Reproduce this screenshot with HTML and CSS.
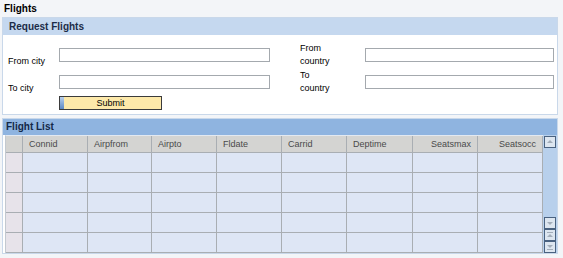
FILE: index.html
```html
<!DOCTYPE html>
<html lang="en">
<head>
  <meta charset="UTF-8" />
  <title>Flights</title>
  <link rel="stylesheet" href="styles.css">
</head>
<body>
  <div class="page">
    <div class="page-title">Flights</div>

    <div class="panel request">
      <div class="panel-head">Request Flights</div>
      <div class="form">
        <label class="lbl city" for="fromCity">From city</label>
        <input class="field city-field" id="fromCity" type="text" />
        <label class="lbl country" for="fromCountry">From<br>country</label>
        <input class="field country-field" id="fromCountry" type="text" />

        <label class="lbl city" for="toCity">To city</label>
        <input class="field city-field" id="toCity" type="text" />
        <label class="lbl country" for="toCountry">To<br>country</label>
        <input class="field country-field" id="toCountry" type="text" />

        <button class="submit" type="button">Submit</button>
      </div>
    </div>

    <div class="panel flights">
      <div class="panel-head dark">Flight List</div>
      <div class="list-body">
        <table class="flight-table">
          <colgroup>
            <col class="c-sel"><col class="c65"><col class="c64"><col class="c65"><col class="c65">
            <col class="c65"><col class="c66"><col class="c65"><col class="c65">
          </colgroup>
          <thead>
            <tr>
              <th class="sel"></th>
              <th>Connid</th>
              <th>Airpfrom</th>
              <th>Airpto</th>
              <th>Fldate</th>
              <th>Carrid</th>
              <th>Deptime</th>
              <th class="num">Seatsmax</th>
              <th class="num">Seatsocc</th>
            </tr>
          </thead>
          <tbody>
            <tr><td class="sel"></td><td></td><td></td><td></td><td></td><td></td><td></td><td></td><td></td></tr>
            <tr><td class="sel"></td><td></td><td></td><td></td><td></td><td></td><td></td><td></td><td></td></tr>
            <tr><td class="sel"></td><td></td><td></td><td></td><td></td><td></td><td></td><td></td><td></td></tr>
            <tr><td class="sel"></td><td></td><td></td><td></td><td></td><td></td><td></td><td></td><td></td></tr>
            <tr><td class="sel"></td><td></td><td></td><td></td><td></td><td></td><td></td><td></td><td></td></tr>
          </tbody>
        </table>

        <div class="scrollbar">
          <span class="sb-btn">
            <svg viewBox="0 0 10 10"><polygon points="2,6 5,3 8,6" /></svg>
          </span>
          <span class="sb-track"></span>
          <span class="sb-btn">
            <svg viewBox="0 0 10 10"><polygon points="2,4 5,7 8,4" /></svg>
          </span>
          <span class="sb-btn">
            <svg viewBox="0 0 10 10"><rect x="2" y="2" width="6" height="1" /><polygon points="2,7 5,4 8,7" /></svg>
          </span>
          <span class="sb-btn">
            <svg viewBox="0 0 10 10"><polygon points="2,3 5,6 8,3" /><rect x="2" y="7" width="6" height="1" /></svg>
          </span>
        </div>
      </div>
    </div>
  </div>
</body>
</html>
```

FILE: styles.css
```css
body { margin: 0; background: #f3f5f8; font-family: "Liberation Sans", Arial, sans-serif; font-size: 9px; color: #000; }
.page { padding: 2px 5px 0 2px; }
.page-title { font-weight: bold; font-size: 10px; line-height: 13px; padding-left: 2px; margin-bottom: 2px; }

.panel { width: 556px; box-sizing: border-box; border: 1px solid #c9d8ea; background: #fff; }
.panel-head { height: 17px; line-height: 17px; padding-left: 6px; background: #c5d8ef; color: #1c2c48; font-weight: bold; font-size: 10px; }
.panel-head.dark { height: 16px; line-height: 16px; padding-left: 3px; background: #8fb4e0; color: #132848; }
.flights { margin-top: 3px; }

/* request form */
.form { display: grid; grid-template-columns: 51px 211px 30px 65px 189px; grid-template-rows: 26px 26px 14px; row-gap: 1px; padding: 7px 0 4px 5px; }
.lbl { align-self: end; line-height: 13px; }
.lbl.city { grid-column: 1; }
.lbl.country { grid-column: 4; }
.field { align-self: center; height: 14px; box-sizing: border-box; margin: 0; padding: 0 2px; border: 1px solid #a4a9ae; background: #fff; font: 9px "Liberation Sans", Arial, sans-serif; }
.city-field { grid-column: 2; width: 211px; }
.country-field { grid-column: 5; width: 189px; }
.submit { grid-column: 2; width: 103px; height: 14px; padding: 0; border: 1px solid #3b3b3b; font: 9px "Liberation Sans", Arial, sans-serif; color: #000;
  background: linear-gradient(to bottom, #b9d0ee, #5d89c4) 0 0 / 4px 100% no-repeat, #fde9aa; }

/* flight list */
.list-body { display: flex; padding-left: 2px; }
.flight-table { width: 538px; table-layout: fixed; border-collapse: separate; border-spacing: 0; border-top: 1px solid #e3e9f1; border-left: 1px solid #c3c9d0; }
.c-sel { width: 17px; }
.c64 { width: 64px; }
.c65 { width: 65px; }
.c66 { width: 66px; }
.flight-table th, .flight-table td { padding: 0; border-right: 1px solid #a9aeb3; border-bottom: 1px solid #a9aeb3; }
.flight-table th { height: 16px; padding: 0 6px; background: #d4d4d2; color: #4a4a4a; font-weight: normal; text-align: left; white-space: nowrap; overflow: hidden; }
.flight-table th.num { text-align: right; padding-right: 6px; }
.flight-table th.sel { padding: 0; }
.flight-table td { height: 19px; background: #dee6f5; }
.flight-table td.sel { background: #e7e3ea; }

.scrollbar { width: 14px; display: flex; flex-direction: column; background: #b8d0ec; }
.sb-track { flex: 1; }
.sb-btn { width: 12px; height: 12px; margin-left: 1px; box-sizing: border-box; border: 1px solid #4a6280; background: #dde6f0; display: flex; }
.sb-btn:first-child { margin-top: 1px; }
.sb-btn svg { width: 10px; height: 10px; fill: #a3adb9; }
```
